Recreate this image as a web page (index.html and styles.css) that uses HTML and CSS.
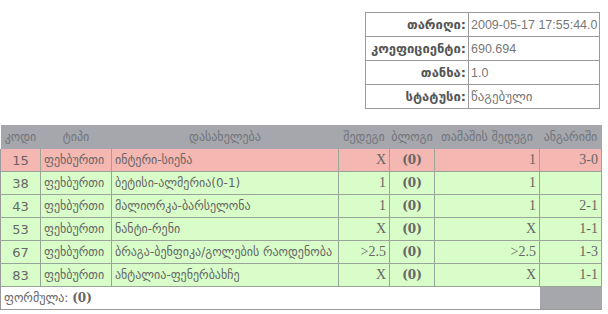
FILE: index.html
```html
<!DOCTYPE html>
<html>
<head>
<meta charset="utf-8">
<link rel="stylesheet" href="styles.css">
</head>
<body>
<div class="wrap">
  <table class="info">
    <colgroup><col class="lab"><col class="val"></colgroup>
    <tr><th>თარიღი:</th><td>2009-05-17 17:55:44.0</td></tr>
    <tr><th>კოეფიციენტი:</th><td>690.694</td></tr>
    <tr><th>თანხა:</th><td>1.0</td></tr>
    <tr><th>სტატუსი:</th><td class="geo">წაგებული</td></tr>
  </table>
  <table class="bets">
    <colgroup>
      <col class="c1"><col class="c2"><col class="c3"><col class="c4"><col class="c5"><col class="c6"><col class="c7">
    </colgroup>
    <thead>
      <tr><th>კოდი</th><th>ტიპი</th><th>დასახელება</th><th>შედეგი</th><th>ბლოგი</th><th>თამაშის შედეგი</th><th>ანგარიში</th></tr>
    </thead>
    <tbody>
      <tr class="lost"><td class="code">15</td><td class="txt">ფეხბურთი</td><td class="txt">ინტერი-სიენა</td><td class="num">X</td><td class="blog">(0)</td><td class="num">1</td><td class="num">3-0</td></tr>
      <tr class="won"><td class="code">38</td><td class="txt">ფეხბურთი</td><td class="txt">ბეტისი-ალმერია(0-1)</td><td class="num">1</td><td class="blog">(0)</td><td class="num">1</td><td class="num"></td></tr>
      <tr class="won"><td class="code">43</td><td class="txt">ფეხბურთი</td><td class="txt">მალიორკა-ბარსელონა</td><td class="num">1</td><td class="blog">(0)</td><td class="num">1</td><td class="num">2-1</td></tr>
      <tr class="won"><td class="code">53</td><td class="txt">ფეხბურთი</td><td class="txt">ნანტი-რენი</td><td class="num">X</td><td class="blog">(0)</td><td class="num">X</td><td class="num">1-1</td></tr>
      <tr class="won"><td class="code">67</td><td class="txt">ფეხბურთი</td><td class="txt">ბრაგა-ბენფიკა/გოლების რაოდენობა</td><td class="num">&gt;2.5</td><td class="blog">(0)</td><td class="num">&gt;2.5</td><td class="num">1-3</td></tr>
      <tr class="won"><td class="code">83</td><td class="txt">ფეხბურთი</td><td class="txt">ანტალია-ფენერბახჩე</td><td class="num">X</td><td class="blog">(0)</td><td class="num">X</td><td class="num">1-1</td></tr>
    </tbody>
    <tfoot>
      <tr><td class="formula" colspan="6">ფორმულა: <b>(0)</b></td><td class="gray"></td></tr>
    </tfoot>
  </table>
</div>
</body>
</html>
```
FILE: styles.css
```css
html, body {
  margin: 0;
  padding: 0;
  background: #ffffff;
}
body {
  font-family: "DejaVu Sans", sans-serif;
  font-size: 12px;
  color: #666666;
}
.wrap {
  width: 601px;
  padding-top: 12px;
}
.info {
  margin-left: auto;
  margin-right: 1px;
  width: 234px;
  table-layout: fixed;
  border-collapse: collapse;
  border: 1px solid #9a9a9a;
}
.lab { width: 103px; }
.val { width: 131px; }
.info th, .info td {
  height: 23px;
  padding: 0 2px;
  border: 1px solid #9a9a9a;
  white-space: nowrap;
  overflow: visible;
}
.info th {
  text-align: right;
  font-weight: bold;
  font-size: 13px;
  color: #555555;
}
.info td {
  text-align: left;
  padding: 0 0 0 2px;
  color: #777777;
  font-family: "Liberation Sans", "DejaVu Sans", sans-serif;
  font-size: 12.5px;
}
.info td.geo {
  font-family: "DejaVu Sans", sans-serif;
  font-size: 13px;
}
.bets {
  margin-top: 16px;
  width: 601px;
  table-layout: fixed;
  border-collapse: collapse;
}
.c1 { width: 40px; }
.c2 { width: 71px; }
.c3 { width: 227px; }
.c4 { width: 51px; }
.c5 { width: 45px; }
.c6 { width: 105px; }
.c7 { width: 62px; }
.bets thead th {
  background: #a5a7ac;
  color: #73757a;
  font-weight: normal;
  height: 24px;
  padding: 0;
  text-align: center;
  white-space: nowrap;
  overflow: visible;
}
.bets tbody td {
  height: 22px;
  padding: 0 3px;
  border: 1px solid #9aa59a;
  white-space: nowrap;
  overflow: hidden;
}
.bets tbody tr:first-child td { border-top: 0; }
.bets tbody td:first-child { border-left: 1px solid #9a9a9a; }
.lost td { background: #f5b7b1; }
.won td { background: #d9fdc9; }
.code {
  text-align: center;
  font-size: 13px;
}
.txt {
  text-align: left;
  font-size: 12px;
}
.num {
  text-align: right;
  font-family: "Liberation Serif", serif;
  font-size: 14px;
}
.blog {
  text-align: center;
  font-family: "DejaVu Serif", serif;
  font-weight: bold;
  font-size: 12px;
}
.bets tfoot td {
  height: 22px;
  border-bottom: 1px solid #9a9a9a;
}
.formula {
  padding: 0 3px;
  border-left: 1px solid #9a9a9a;
  background: #ffffff;
}
.formula b {
  font-family: "DejaVu Serif", serif;
}
.gray { background: #a5a7ac; padding: 0; }
```
